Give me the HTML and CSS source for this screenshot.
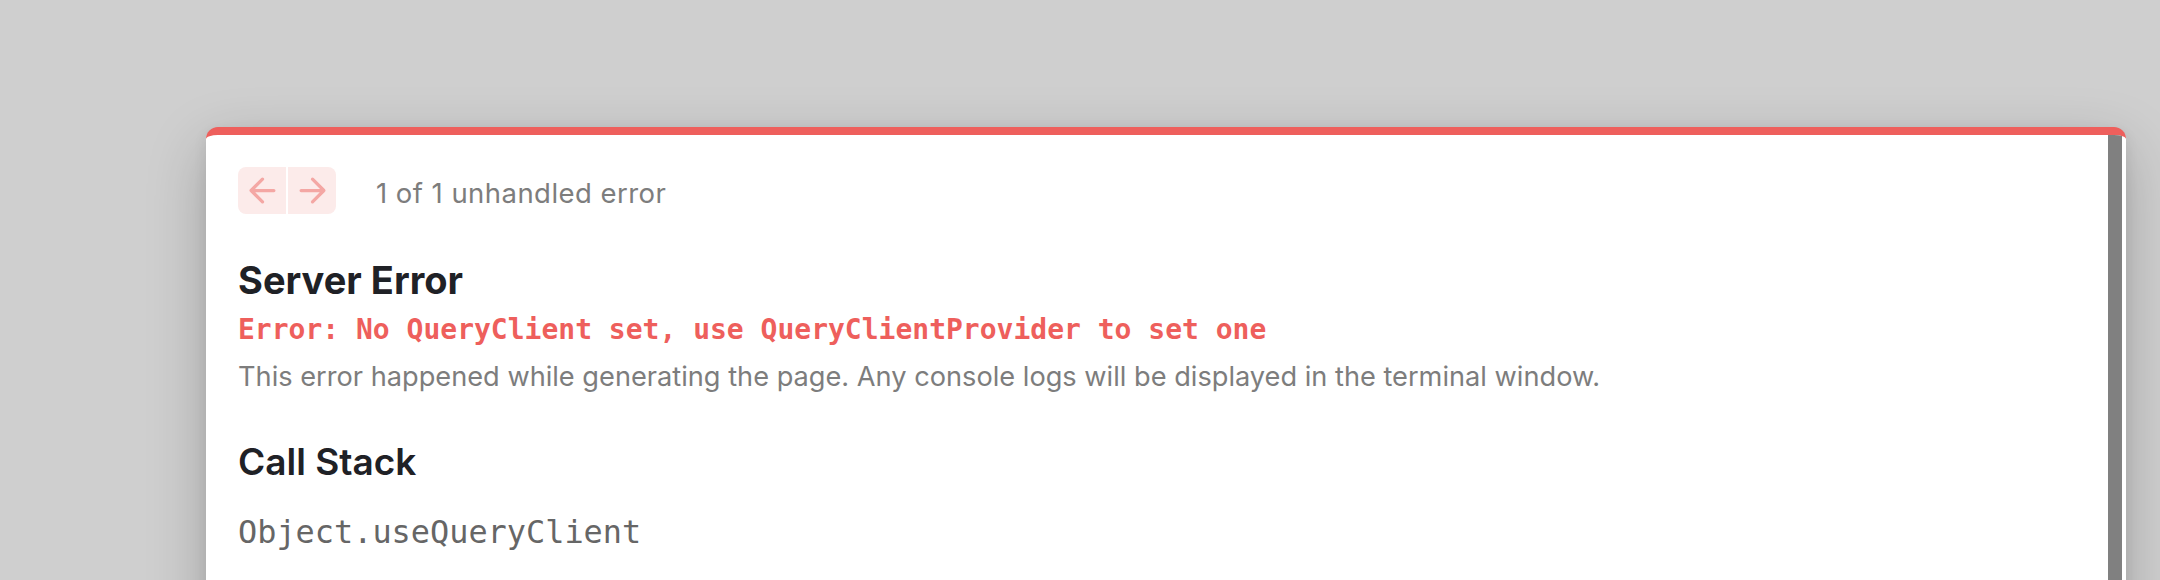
FILE: index.html
```html
<!DOCTYPE html>
<html lang="en">
<head>
<meta charset="utf-8">
<title>Server Error</title>
<link rel="stylesheet" href="styles.css">
</head>
<body>
<div class="backdrop">
  <div class="dialog">
    <div class="dialog-body">
      <div class="dialog-content">
        <div class="header-row">
          <nav class="pager">
            <button class="pager-btn" aria-label="previous">
              <svg viewBox="0 0 24 24" width="39" height="39" fill="none" stroke="currentColor" stroke-width="2" stroke-linecap="round" stroke-linejoin="round"><path d="M19 12H5M12 19L5 12L12 5"/></svg>
            </button>
            <button class="pager-btn" aria-label="next">
              <svg viewBox="0 0 24 24" width="39" height="39" fill="none" stroke="currentColor" stroke-width="2" stroke-linecap="round" stroke-linejoin="round"><path d="M5 12H19M12 5L19 12L12 19"/></svg>
            </button>
          </nav>
          <span class="pager-label">1 of 1 unhandled error</span>
        </div>
        <h1 class="title">Server Error</h1>
        <p class="error-message">Error: No QueryClient set, use QueryClientProvider to set one</p>
        <p class="description">This error happened while generating the page. Any console logs will be displayed in the terminal window.</p>
        <h2 class="section-title">Call Stack</h2>
        <h3 class="frame">Object.useQueryClient</h3>
      </div>
      <div class="scrollbar"></div>
    </div>
  </div>
</div>
</body>
</html>
```
FILE: styles.css
```css
* { box-sizing: border-box; }
html, body { margin: 0; height: 100%; }
body {
  background: #cfcfcf;
  overflow: hidden;
  font-family: Inter, "Noto Sans", sans-serif;
}
.backdrop {
  height: 100%;
  padding: 127px 34px 0 206px;
}
.dialog {
  width: 1920px;
  height: 600px;
  background: #ffffff;
  border-top: 8px solid #ee5f5c;
  border-radius: 12px 12px 0 0;
  box-shadow: 0 20px 60px rgba(0, 0, 0, 0.22), 0 4px 14px rgba(0, 0, 0, 0.08);
  overflow: hidden;
}
.dialog-body {
  display: flex;
  height: 100%;
  padding-right: 4px;
}
.dialog-content {
  flex: 1;
  padding: 32px 32px 0 32px;
}
.scrollbar {
  width: 14px;
  background: #808080;
}
.header-row {
  display: flex;
  align-items: center;
  height: 47px;
}
.pager {
  display: flex;
  gap: 2px;
  margin-right: 40px;
}
.pager-btn {
  width: 48px;
  height: 47px;
  border: none;
  padding: 0;
  margin: 0;
  background: #fcebea;
  color: #f4a7a4;
  display: flex;
  align-items: center;
  justify-content: center;
}
.pager-btn:first-child { border-radius: 8px 0 0 8px; }
.pager-btn:last-child { border-radius: 0 8px 8px 0; }
.pager-label {
  font-size: 27.5px;
  letter-spacing: 0.45px;
  line-height: 36px;
  color: #7d7d7d;
  padding-top: 4px;
}
.title {
  margin: 43px 0 0;
  font-size: 38px;
  line-height: 46px;
  font-weight: 700;
  color: #1f2126;
}
.error-message {
  margin: 9px 0 0;
  font-family: "DejaVu Sans Mono", "Liberation Mono", monospace;
  font-weight: 700;
  font-size: 28px;
  line-height: 36px;
  color: #ee5f5c;
}
.description {
  margin: 11px 0 0;
  font-size: 27.2px;
  line-height: 36px;
  color: #7d7d7d;
}
.section-title {
  margin: 44px 0 0;
  font-size: 37px;
  line-height: 46px;
  font-weight: 600;
  color: #1f2126;
}
.frame {
  margin: 27px 0 0;
  font-family: "DejaVu Sans Mono", "Liberation Mono", monospace;
  font-weight: 400;
  font-size: 31.9px;
  line-height: 40px;
  color: #666666;
}
```
